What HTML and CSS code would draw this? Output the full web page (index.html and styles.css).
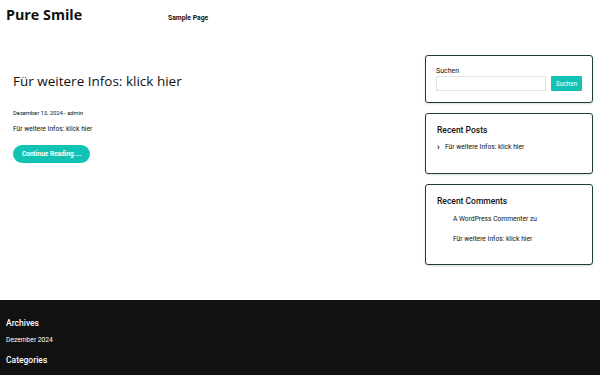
FILE: index.html
```html
<!DOCTYPE html>
<html lang="de">
<head>
  <meta charset="UTF-8" />
  <meta name="viewport" content="width=device-width, initial-scale=1.0"/>
  <title>Pure Smile</title>
  <link rel="stylesheet" href="styles.css">
</head>
<body>

  <header class="site-header">
    <div class="logo">Pure Smile</div>
    <nav class="nav">
      <a href="#">Sample Page</a>
    </nav>
  </header>

  <div class="content">
    <main class="posts">
      <article class="post">
        <h1 class="post-title">Für weitere Infos: klick hier</h1>
        <p class="post-meta">Dezember 13, 2024 - admin</p>
        <p class="post-excerpt">Für weitere Infos: klick hier</p>
        <a class="read-more" href="#">Continue Reading....</a>
      </article>
    </main>

    <aside class="sidebar">
      <!-- search -->
      <div class="widget search-widget">
        <label class="search-label">Suchen</label>
        <div class="search-row">
          <input type="text" class="search-input" />
          <button class="search-btn">Suchen</button>
        </div>
      </div>

      <div class="widget">
        <h2 class="widget-title">Recent Posts</h2>
        <ul class="post-list">
          <li><span class="chev">&#8250;</span>Für weitere Infos: klick hier</li>
        </ul>
      </div>

      <div class="widget comments-widget">
        <h2 class="widget-title">Recent Comments</h2>
        <ul class="comment-list">
          <li>A WordPress Commenter zu</li>
          <li>Für weitere Infos: klick hier</li>
        </ul>
      </div>
    </aside>
  </div>

  <footer class="site-footer">
    <h3 class="footer-title">Archives</h3>
    <p class="footer-item">Dezember 2024</p>
    <h3 class="footer-title">Categories</h3>
  </footer>

</body>
</html>
```

FILE: styles.css
```css
* {
  margin: 0;
  padding: 0;
  box-sizing: border-box;
}

body {
  font-family: Roboto, 'Liberation Sans', sans-serif;
  color: #111;
  background: #fff;
}

a {
  color: inherit;
  text-decoration: none;
}

.site-header {
  display: flex;
  align-items: center;
  height: 30px;
  padding: 0 6px 1px;
}

.logo {
  font-family: 'Open Sans', sans-serif;
  font-weight: 700;
  font-size: 14.3px;
  color: #111;
  width: 162px;
}

.nav a {
  font-size: 6.8px;
  font-weight: 700;
  color: #111;
}

.content {
  display: grid;
  grid-template-columns: 1fr 168px;
  column-gap: 15px;
  padding: 25px 7px 0 13px;
  height: 270px;
}

.post-title {
  font-family: 'Open Sans', sans-serif;
  font-weight: 500;
  font-size: 13.5px;
  line-height: 18px;
  color: #111;
  margin-top: 17px;
}

.post-meta {
  font-size: 5.8px;
  line-height: 8px;
  margin-top: 19px;
}

.post-excerpt {
  font-size: 6.7px;
  line-height: 8px;
  margin-top: 8px;
}

.read-more {
  display: inline-block;
  margin-top: 12px;
  background: #12c2b4;
  color: #fff;
  font-size: 6.5px;
  font-weight: 700;
  padding: 5px 9px;
  border-radius: 10px;
  line-height: 8px;
}

.sidebar {
  display: flex;
  flex-direction: column;
  gap: 10px;
}

.widget {
  border: 1px solid #1f3d40;
  border-radius: 3px;
  padding: 11px 10px 22px 11px;
  box-shadow: 0 1px 2px rgba(0, 0, 0, 0.15);
}

.search-widget {
  padding: 11px 10px 11px 10px;
}

.comments-widget {
  padding-bottom: 21px;
}

.search-label {
  display: block;
  font-size: 7px;
  line-height: 8px;
  margin-bottom: 1px;
}

.search-row {
  display: flex;
  gap: 5px;
}

.search-input {
  width: 110px;
  height: 15px;
  border: 1px solid #e3e3e3;
}

.search-btn {
  width: 31px;
  height: 15px;
  border: none;
  background: #12c2b4;
  color: #fff;
  font-size: 6.5px;
  font-family: Roboto, sans-serif;
  border-radius: 1px;
}

.widget-title {
  font-size: 8.5px;
  font-weight: 500;
  line-height: 10px;
}

.post-list,
.comment-list {
  list-style: none;
  font-size: 6.7px;
  line-height: 8px;
}

.post-list {
  margin-top: 8px;
}

.post-list li {
  display: flex;
  align-items: center;
}

.chev {
  font-size: 9px;
  font-weight: 700;
  width: 8px;
  line-height: 8px;
}

.comment-list {
  margin-top: 9px;
}

.comment-list li {
  padding-left: 16px;
}

.comment-list li + li {
  margin-top: 12px;
}

.site-footer {
  background: #111;
  color: #fff;
  padding: 18px 6px 20px;
  height: 75px;
}

.footer-title {
  font-size: 8.5px;
  font-weight: 500;
  line-height: 10px;
}

.footer-item {
  font-size: 6.7px;
  line-height: 8px;
  margin: 8px 0 11px;
}
```
